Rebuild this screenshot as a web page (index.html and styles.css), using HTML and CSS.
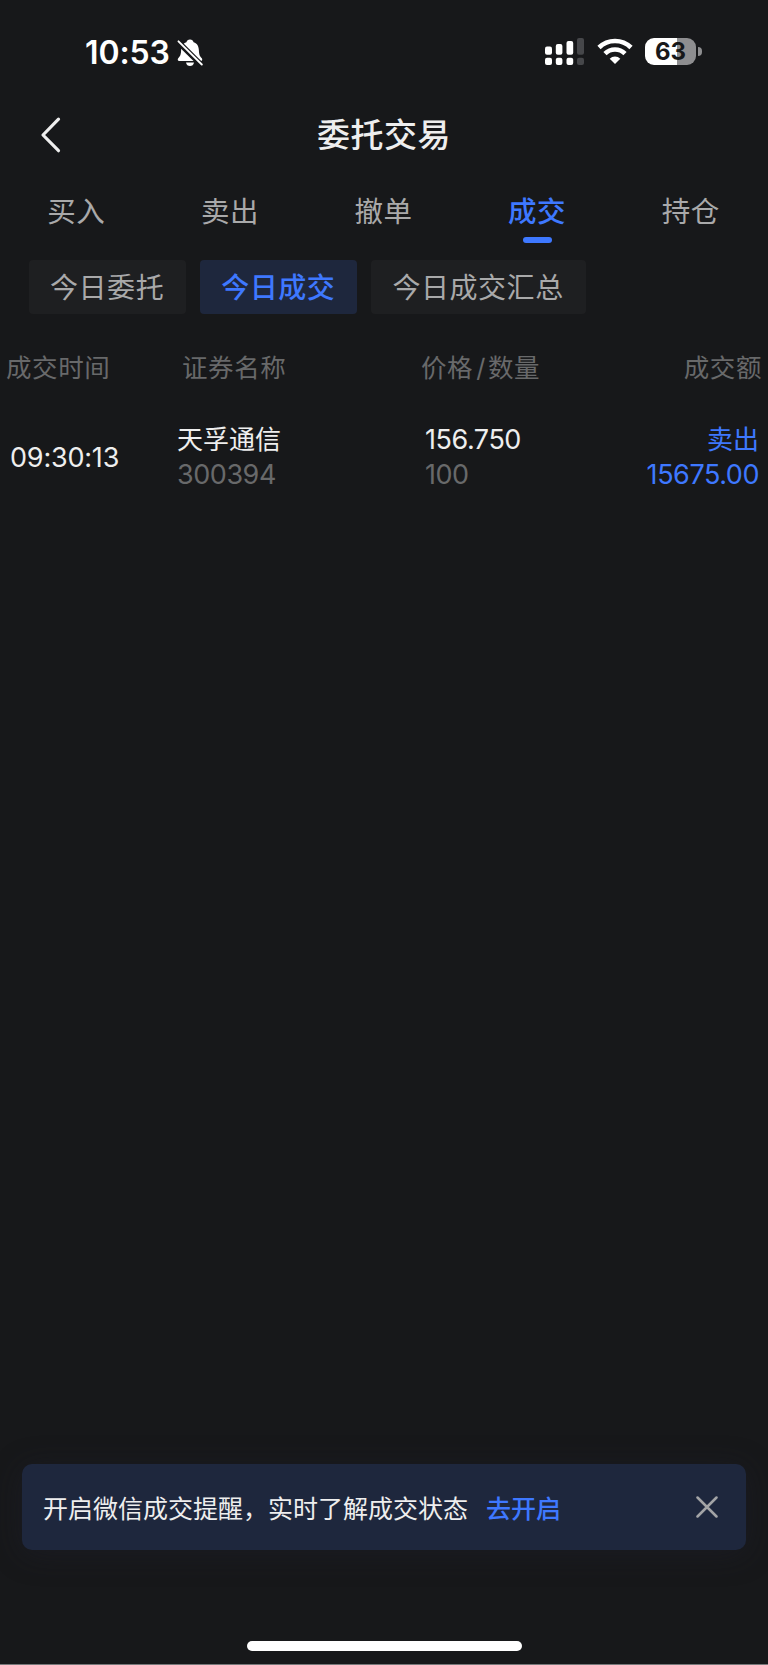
FILE: index.html
```
<!DOCTYPE html>
<html lang="zh-CN">

<head>
    <meta charset="UTF-8" />
    <title>委托交易</title>
    <link rel="stylesheet" href="styles.css">
</head>

<body>

    <div class="status-bar">
        <span class="clock">10:53</span>
        <svg class="bell" width="26" height="28" viewBox="0 0 26 28">
            <path fill="#fff" d="M13 .5c-2 0-3.200 1.100-3.600 2.800C5.600 4.500 4.200 7.600 4.100 11.500c-.1 4.500-1.300 6-2.700 7.500C.3 20.300.6 22 2.300 22h21.400c1.700 0 2-1.700.9-3-1.400-1.500-2.600-3-2.700-7.500-.1-3.900-1.500-7-5.300-8.200C16.200 1.600 15 .5 13 .5z" />
            <path fill="#fff" d="M9 23.500h8c-.4 2.300-2 3.600-4 3.600s-3.600-1.300-4-3.600z" />
            <path stroke="#17181a" stroke-width="5.500" d="M-.5 1.300L25.500 27" />
            <path stroke="#fff" stroke-width="1.900" stroke-linecap="round" d="M1.500 2.300L24.800 25.500" />
        </svg>
        <div class="status-right">
            <svg width="39" height="27" viewBox="0 0 39 27">
                <g fill="#fff">
                    <rect x="0" y="8.500" width="7" height="8.300" rx="2" />
                    <rect x="10.800" y="6" width="6.600" height="10.800" rx="2" />
                    <rect x="21.500" y="3" width="6.700" height="13.800" rx="2" />
                    <rect x="0" y="19.800" width="7" height="7.200" rx="2" />
                    <rect x="10.800" y="19.800" width="6.600" height="7.200" rx="2" />
                    <rect x="21.500" y="19.800" width="6.700" height="7.200" rx="2" />
                </g>
                <g fill="#46474a">
                    <rect x="32" y="0" width="7" height="16.800" rx="2" />
                    <rect x="32" y="19.800" width="7" height="7.200" rx="2" />
                </g>
            </svg>
            <svg class="wifi" width="36" height="27" viewBox="0 0 36 27">
                <g fill="none" stroke="#fff" stroke-width="4.600">
                    <path d="M2 9.500a22.800 22.800 0 0 1 32 0" />
                    <path d="M8 15.600a14.300 14.300 0 0 1 20 0" />
                </g>
                <path fill="#fff" d="M18 26l-5.300-5.300a7.500 7.500 0 0 1 10.600 0z" />
            </svg>
            <div class="battery"><span>63</span></div>
            <div class="battery-cap"></div>
        </div>
    </div>

    <header>
        <svg class="back" width="22" height="38" viewBox="0 0 22 38">
            <path fill="none" stroke="#eee" stroke-width="3.200" stroke-linecap="round" stroke-linejoin="round" d="M19.500 3.200L4 19 19.500 34.700" />
        </svg>
        <h1>委托交易</h1>
    </header>

    <nav class="tabs">
        <span>买入</span>
        <span>卖出</span>
        <span>撤单</span>
        <span class="active">成交</span>
        <span>持仓</span>
    </nav>

    <div class="chips">
        <span>今日委托</span>
        <span class="active">今日成交</span>
        <span>今日成交汇总</span>
    </div>

    <div class="table-head">
        <span>成交时间</span>
        <span>证券名称</span>
        <span>价格<i>/</i>数量</span>
        <span>成交额</span>
    </div>

    <div class="deal">
        <div class="time">09:30:13</div>
        <div class="name">
            <div>天孚通信</div>
            <div class="num muted">300394</div>
        </div>
        <div class="price">
            <div class="num">156.750</div>
            <div class="num muted">100</div>
        </div>
        <div class="amount">
            <div>卖出</div>
            <div class="num">15675.00</div>
        </div>
    </div>

    <div class="notice">
        <span>开启微信成交提醒，实时了解成交状态</span>
        <a>去开启</a>
        <svg width="22" height="22" viewBox="0 0 22 22">
            <path stroke="#a3a4a6" stroke-width="2.500" stroke-linecap="round" d="M1.500 1.500l19 19M20.500 1.500l-19 19" />
        </svg>
    </div>

    <div class="home-bar"></div>

</body>

</html>
```

FILE: styles.css
```
* {
    box-sizing: border-box;
}

body {
    display: flex;
    flex-direction: column;
    height: 1665px;
    margin: 0;
    border-bottom: 1px solid #77787a;
    background: #17181a;
    color: #eee;
    font-family: Inter, "Noto Sans CJK SC", sans-serif;
    font-size: 25px;
}

svg {
    display: block;
    flex: none;
}

.status-bar {
    display: flex;
    align-items: center;
    height: 103px;
    padding: 0 66px 0 85px;
    color: #fff;
}

.clock {
    width: 92px;
    font-size: 32px;
    font-weight: 600;
    line-height: 40px;
    letter-spacing: -0.100px;
    padding-top: 2px;
}

.bell {
    margin-top: 2px;
}

.status-right {
    display: flex;
    align-items: center;
    margin-left: auto;
}

.wifi {
    margin: 0 12px 0 13px;
}

.battery {
    width: 51px;
    height: 27px;
    border-radius: 9px;
    background: linear-gradient(90deg, #fff 63%, #8e8e90 63%);
    color: #17181a;
    font-size: 24px;
    font-weight: 700;
    line-height: 28px;
    text-align: center;
}

.battery-cap {
    width: 4px;
    height: 9px;
    margin-left: 2px;
    border-radius: 0 5px 5px 0;
    background: #8e8e90;
}

header {
    display: grid;
    grid-template-columns: 60px 1fr 60px;
    align-items: center;
    height: 64px;
    padding: 0 39px;
}

h1 {
    margin: 0;
    font-size: 33px;
    font-weight: 500;
    line-height: 62px;
    letter-spacing: 0.500px;
    text-align: center;
}

.tabs {
    display: flex;
    height: 93px;
    padding-top: 21px;
    color: #a9a9aa;
    font-size: 28.500px;
    line-height: 48px;
    letter-spacing: 0.500px;
}

.tabs span {
    flex: 1;
    padding-right: 1px;
    text-align: center;
}

.tabs .active {
    color: #3e78ff;
    font-weight: 500;
}

.tabs .active::after {
    content: "";
    display: block;
    width: 29px;
    height: 6px;
    margin: 1px auto 0;
    border-radius: 3px;
    background: #3e78ff;
}

.chips {
    display: flex;
    gap: 14px;
    padding-left: 29px;
}

.chips span {
    height: 54px;
    padding: 2px 22px 0 21px;
    border-radius: 4px;
    background: #1e1f21;
    color: #a9a9aa;
    font-size: 28px;
    line-height: 53px;
    letter-spacing: 0.550px;
}

.chips .active {
    background: #1e273d;
    color: #3e78ff;
    font-weight: 500;
}

.table-head,
.deal {
    display: grid;
    align-items: center;
}

.table-head {
    grid-template-columns: 176px 239px 1fr auto;
    height: 76px;
    margin: 13px 0 4px;
    padding: 0 6px;
    color: #68696a;
    font-size: 25.500px;
    letter-spacing: 0.600px;
}

.table-head i {
    padding: 0 2px 0 3px;
    font-style: normal;
}

.deal {
    grid-template-columns: 167px 248px 1fr auto;
    height: 100px;
    padding: 0 9px 0 10px;
    font-size: 26px;
    line-height: 35px;
}

.deal .num {
    font-size: 27px;
    letter-spacing: -0.450px;
}

.time {
    font-size: 27px;
    letter-spacing: -0.200px;
}

.muted {
    color: #68696a;
}

.amount {
    color: #3e78ff;
    text-align: right;
}

.notice {
    display: flex;
    align-items: center;
    height: 86px;
    margin: auto 22px 0;
    padding: 0 28px 0 21px;
    border-radius: 10px;
    background: #1e273d;
    box-shadow: 0 4px 30px rgba(32, 32, 48, 0.400);
}

.notice a {
    margin-left: 18px;
    color: #3e78ff;
    font-weight: 500;
}

.notice svg {
    margin-left: auto;
}

.home-bar {
    width: 275px;
    height: 10px;
    margin: 91px auto 13px;
    border-radius: 5px;
    background: #fff;
}
```
